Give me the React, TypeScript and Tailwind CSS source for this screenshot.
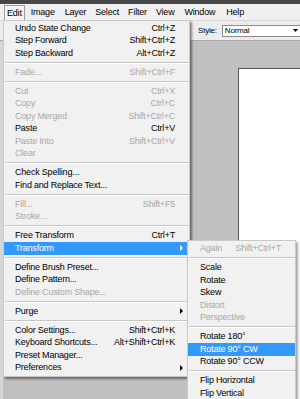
import type { ReactNode } from 'react';

type Item =
  | { sep: true }
  | { label: string; keys?: string; off?: boolean; sub?: boolean; on?: boolean };

const editMenu: Item[] = [
  { label: 'Undo State Change', keys: 'Ctrl+Z' },
  { label: 'Step Forward', keys: 'Shift+Ctrl+Z' },
  { label: 'Step Backward', keys: 'Alt+Ctrl+Z' },
  { sep: true },
  { label: 'Fade...', keys: 'Shift+Ctrl+F', off: true },
  { sep: true },
  { label: 'Cut', keys: 'Ctrl+X', off: true },
  { label: 'Copy', keys: 'Ctrl+C', off: true },
  { label: 'Copy Merged', keys: 'Shift+Ctrl+C', off: true },
  { label: 'Paste', keys: 'Ctrl+V' },
  { label: 'Paste Into', keys: 'Shift+Ctrl+V', off: true },
  { label: 'Clear', off: true },
  { sep: true },
  { label: 'Check Spelling...' },
  { label: 'Find and Replace Text...' },
  { sep: true },
  { label: 'Fill...', keys: 'Shift+F5', off: true },
  { label: 'Stroke...', off: true },
  { sep: true },
  { label: 'Free Transform', keys: 'Ctrl+T' },
  { label: 'Transform', sub: true, on: true },
  { sep: true },
  { label: 'Define Brush Preset...' },
  { label: 'Define Pattern...' },
  { label: 'Define Custom Shape...', off: true },
  { sep: true },
  { label: 'Purge', sub: true },
  { sep: true },
  { label: 'Color Settings...', keys: 'Shift+Ctrl+K' },
  { label: 'Keyboard Shortcuts...', keys: 'Alt+Shift+Ctrl+K' },
  { label: 'Preset Manager...' },
  { label: 'Preferences', sub: true },
];

const transformMenu: Item[] = [
  { label: 'Again', keys: 'Shift+Ctrl+T', off: true },
  { sep: true },
  { label: 'Scale' },
  { label: 'Rotate' },
  { label: 'Skew' },
  { label: 'Distort', off: true },
  { label: 'Perspective', off: true },
  { sep: true },
  { label: 'Rotate 180°' },
  { label: 'Rotate 90° CW', on: true },
  { label: 'Rotate 90° CCW' },
  { sep: true },
  { label: 'Flip Horizontal' },
  { label: 'Flip Vertical' },
];

function Arrow({ white }: { white?: boolean }) {
  return (
    <svg width="3" height="6" viewBox="0 0 3 6" className="shrink-0">
      <polygon points="0,0 3,3 0,6" fill={white ? '#ffffff' : '#000000'} />
    </svg>
  );
}

function MenuRows({ items, padL, padR }: { items: Item[]; padL: string; padR: string }) {
  return (
    <>
      {items.map((it, i) => {
        if ('sep' in it) {
          return (
            <div key={i} className="h-[6.5px] flex flex-col justify-center pl-[1px]">
              <div className="h-px bg-[#c5c5c5]" />
              <div className="h-px bg-white" />
            </div>
          );
        }
        const color = it.on ? 'bg-[#3399ff] text-white' : it.off ? 'text-[#a8a8a8]' : 'text-black';
        return (
          <div key={i} className={`h-[12.5px] flex items-center justify-between ${padL} ${color}`}>
            <span>{it.label}</span>
            {it.sub ? (
              <span className="pr-[6px] flex items-center">
                <Arrow white={it.on} />
              </span>
            ) : (
              <span className={padR}>{it.keys}</span>
            )}
          </div>
        );
      })}
    </>
  );
}

function MenuTitle({ children, active }: { children: ReactNode; active?: boolean }) {
  return (
    <div
      className={`h-[15px] flex items-center ${
        active ? 'border border-[#9c9c9c] border-b-0 bg-[#f4f4f4] px-[2px]' : ''
      }`}
    >
      {children}
    </div>
  );
}

export default function App() {
  return (
    <div
      className="relative w-[300px] h-[399px] overflow-hidden bg-[#c0c0c0] text-[9px] tracking-[-0.2px] leading-none select-none"
      style={{ fontFamily: '"Liberation Sans", Arial, sans-serif' }}
    >
      {/* title bar */}
      <div className="h-[4px] bg-[#474747]" />

      {/* menu bar */}
      <div className="h-[16px] bg-[#f0f0f0] flex items-end pl-[4px] text-black">
        <MenuTitle active>Edit</MenuTitle>
        <div className="flex pb-[3px] text-[9px]">
          <span className="ml-[6px]">Image</span>
          <span className="ml-[10px]">Layer</span>
          <span className="ml-[9px]">Select</span>
          <span className="ml-[9px]">Filter</span>
          <span className="ml-[9px]">View</span>
          <span className="ml-[10px]">Window</span>
          <span className="ml-[11px]">Help</span>
        </div>
      </div>

      {/* options bar */}
      <div className="h-[21px] bg-[#ececec] border-t border-[#d6d6d6] border-b border-b-[#a9a9a9] flex items-center pl-[198px]">
        <span className="text-[8px] text-black">Style:</span>
        <div className="ml-[5px] flex-1 h-[12px] bg-white border border-[#8c8c8c] border-r-0 flex items-center justify-between pl-[2px] pr-[2px]">
          <span className="text-[8px]">Normal</span>
          <svg width="5" height="3" viewBox="0 0 5 3">
            <polygon points="0,0 5,0 2.5,3" fill="#000" />
          </svg>
        </div>
      </div>

      {/* workspace */}
      <div className="flex h-[358px]">
        <div className="w-[3px] bg-[#d6d6d6]" />
        <div className="flex-1 bg-[#c0c0c0] pl-[235px] pt-[27px]">
          <div className="h-full bg-white border-l border-t border-[#555555]" />
        </div>
      </div>

      {/* Edit menu */}
      <div className="absolute left-[3px] top-[20px] w-[187px] pt-[1px] pb-[2px] bg-[#f1f1f1] border border-[#c9c9c9] shadow-[2px_2px_2px_rgba(0,0,0,0.45)]">
        <MenuRows items={editMenu} padL="pl-[11px]" padR="pr-[14px]" />
      </div>

      {/* Transform submenu */}
      <div className="absolute left-[187px] top-[240px] w-[109px] pt-[1.5px] bg-[#f1f1f1] border border-[#c9c9c9] shadow-[2px_2px_2px_rgba(0,0,0,0.35)]">
        <MenuRows items={transformMenu} padL="pl-[12px]" padR="pr-[14px]" />
      </div>
    </div>
  );
}
